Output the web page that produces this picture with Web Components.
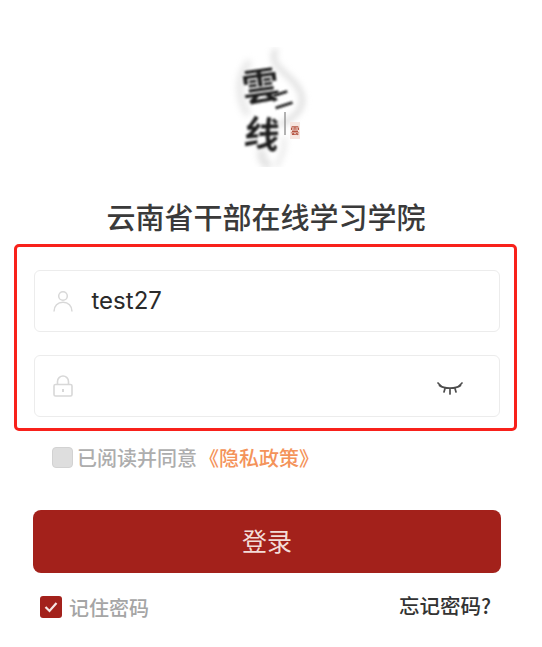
<!DOCTYPE html>
<html lang="zh">
<head>
<meta charset="utf-8">
<title>云南省干部在线学习学院</title>
<style>
  html, body { margin: 0; padding: 0; background: #fff; }
  body { font-family: "Noto Sans CJK SC", "Liberation Sans", sans-serif; }
</style>
</head>
<body>
<login-page>
  <brand-logo></brand-logo>
  <h1 slot="title">云南省干部在线学习学院</h1>
  <login-field slot="fields" value="test27">
    <svg slot="icon" width="20" height="22" viewBox="0 0 20 22" fill="none" stroke="#d8d8d8" stroke-width="1.5"><circle cx="10" cy="6" r="4.300"/><path d="M1 21.500c0-5.500 3.700-9.200 9-9.200s9 3.700 9 9.200"/></svg>
  </login-field>
  <login-field slot="fields">
    <svg slot="icon" width="20" height="22" viewBox="0 0 20 22" fill="none" stroke="#d8d8d8" stroke-width="1.600"><rect x="1" y="9.500" width="18" height="11.500" rx="1.500"/><path d="M4.500 9.500V6.500a5.500 5.500 0 0 1 11 0v3"/><path d="M10 14v3" stroke-width="2"/></svg>
    <svg slot="action" width="26" height="14" viewBox="0 0 26 14" fill="none" stroke="#4d4d4d" stroke-width="1.700" stroke-linecap="round"><path d="M2.500 3.500C7 7 19 7 23.500 3.500"/><path d="M1 1l3 3M25 1l-3 3M8 6.500L7 10M13 7.500V12M18 6.500l1 3.500"/></svg>
  </login-field>
  <check-row slot="agree"><span>已阅读并同意</span><a>《隐私政策》</a></check-row>
  <red-button slot="submit">登录</red-button>
  <remember-row slot="foot"></remember-row>
</login-page>

<script>
class LoginPage extends HTMLElement {
  constructor() {
    super();
    this.attachShadow({ mode: 'open' });
    this.shadowRoot.innerHTML = `
    <style>
      :host { display: flex; flex-direction: column; width: 542px; height: 647px; box-sizing: border-box; padding-top: 47px; overflow: hidden; }
      #logo { display: flex; justify-content: center; }
      #title { display: flex; justify-content: center; margin-top: 28px; padding-right: 10px; }
      ::slotted(h1) { margin: 0; font-size: 29px; line-height: 42px; font-weight: 500; color: #3a3a3a; letter-spacing: 0; }
      #fields { display: flex; flex-direction: column; gap: 23px; box-sizing: border-box; width: 503px; height: 187px; margin: 7px 0 0 14px; padding: 23px 14px 0 17px; border: 3px solid #f8211b; border-radius: 5px; }
      #agree { margin: 15px 0 0 52px; }
      #submit { margin: 42px 41px 0 33px; }
      #foot { margin: 23px 51px 0 40px; }
    </style>
    <div id="logo"><slot></slot></div>
    <div id="title"><slot name="title"></slot></div>
    <div id="fields"><slot name="fields"></slot></div>
    <div id="agree"><slot name="agree"></slot></div>
    <div id="submit"><slot name="submit"></slot></div>
    <div id="foot"><slot name="foot"></slot></div>
    `;
  }
}

class BrandLogo extends HTMLElement {
  constructor() {
    super();
    this.attachShadow({ mode: 'open' });
    this.shadowRoot.innerHTML = `
    <style>
      :host { display: block; position: relative; width: 90px; height: 120px; color: #1c1c1c; font-family: "Noto Sans CJK SC", sans-serif; }
      svg { position: absolute; inset: 0; }
      span { position: absolute; line-height: 1; font-weight: 700; filter: blur(.8px); }
      #a { left: 16px; top: 19px; font-size: 37px; transform: rotate(-8deg); }
      #b { left: 46px; top: 42px; font-size: 20px; transform: rotate(-18deg); }
      #c { left: 19px; top: 67px; font-size: 35px; transform: rotate(8deg); }
      #seal { left: 64px; top: 75px; width: 10px; height: 17px; font-size: 9px; line-height: 17px; text-align: center; color: #b5523f; background: #f6e6e0; filter: blur(.6px); }
    </style>
    <svg width="90" height="120" viewBox="0 0 90 120" fill="none">
      <g style="filter: blur(3px)" stroke="#dcdcdc">
        <path d="M50 2C40 20 66 26 74 44S66 72 54 78" stroke-width="5"/>
        <path d="M24 14C10 30 12 52 22 68" stroke-width="7" stroke="#e8e8e8"/>
        <path d="M36 102C34 110 38 116 44 120" stroke-width="8" stroke="#e2e2e2"/>
        <path d="M58 90C60 102 54 112 50 120" stroke-width="4" stroke="#e6e6e6"/>
      </g>
      <path d="M59 65V88" stroke="#9a9a9a" stroke-width="1.500" style="filter: blur(.6px)"/>
    </svg>
    <span id="a">雲</span><span id="b">二</span><span id="c">线</span><span id="seal">雲</span>
    `;
  }
}

class LoginField extends HTMLElement {
  constructor() {
    super();
    this.attachShadow({ mode: 'open' });
    this.shadowRoot.innerHTML = `
    <style>
      :host { display: flex; align-items: center; box-sizing: border-box; height: 62px; padding: 0 36px 0 17.500px; background: #fff; border: 1.500px solid #ececec; border-radius: 6px; }
      #icon { display: flex; width: 20px; height: 22px; }
      #val { flex: 1; margin-left: 19px; font: 24px/1 Inter, "Liberation Sans", sans-serif; color: #2a2a2a; }
      #action { display: flex; margin-top: 6px; }
    </style>
    <div id="icon"><slot name="icon"></slot></div>
    <div id="val"></div>
    <div id="action"><slot name="action"></slot></div>
    `;
  }
  connectedCallback() {
    this.shadowRoot.getElementById('val').textContent = this.getAttribute('value') || '';
  }
}

class CheckRow extends HTMLElement {
  constructor() {
    super();
    this.attachShadow({ mode: 'open' });
    this.shadowRoot.innerHTML = `
    <style>
      :host { display: flex; align-items: center; gap: 4px; height: 22px; font-size: 20px; font-weight: 500; color: #adadad; white-space: nowrap; }
      #box { width: 21px; height: 21px; box-sizing: border-box; background: #dedede; border: 1px solid #d2d2d2; border-radius: 4px; }
      ::slotted(a) { color: #f4935a; margin-left: -2px; }
    </style>
    <div id="box"></div><slot></slot>
    `;
  }
}

class RedButton extends HTMLElement {
  constructor() {
    super();
    this.attachShadow({ mode: 'open' });
    this.shadowRoot.innerHTML = `
    <style>
      :host { display: flex; align-items: center; justify-content: center; box-sizing: border-box; height: 63px; padding-bottom: 3px; background: #a3211b; border-radius: 8px; color: #f3dcd8; font-size: 25px; }
    </style>
    <slot></slot>
    `;
  }
}

class RememberRow extends HTMLElement {
  constructor() {
    super();
    this.attachShadow({ mode: 'open' });
    this.shadowRoot.innerHTML = `
    <style>
      :host { display: flex; align-items: center; justify-content: space-between; height: 22px; font-size: 20px; white-space: nowrap; }
      #left { display: flex; align-items: center; gap: 7px; color: #a5a5a5; font-weight: 500; }
      #box { display: flex; align-items: center; justify-content: center; width: 22px; height: 22px; background: #a3211b; border-radius: 3px; }
      #forgot { color: #333; font-weight: 500; font-size: 20.500px; margin-bottom: 4px; }
    </style>
    <div id="left">
      <div id="box"><svg width="14" height="12" viewBox="0 0 14 12" fill="none" stroke="#f6e6e4" stroke-width="2.200"><path d="M1.500 6l4 4L12.500 2"/></svg></div>
      <span>记住密码</span>
    </div>
    <span id="forgot">忘记密码?</span>
    `;
  }
}

customElements.define('login-page', LoginPage);
customElements.define('brand-logo', BrandLogo);
customElements.define('login-field', LoginField);
customElements.define('check-row', CheckRow);
customElements.define('red-button', RedButton);
customElements.define('remember-row', RememberRow);
</script>
</body>
</html>
